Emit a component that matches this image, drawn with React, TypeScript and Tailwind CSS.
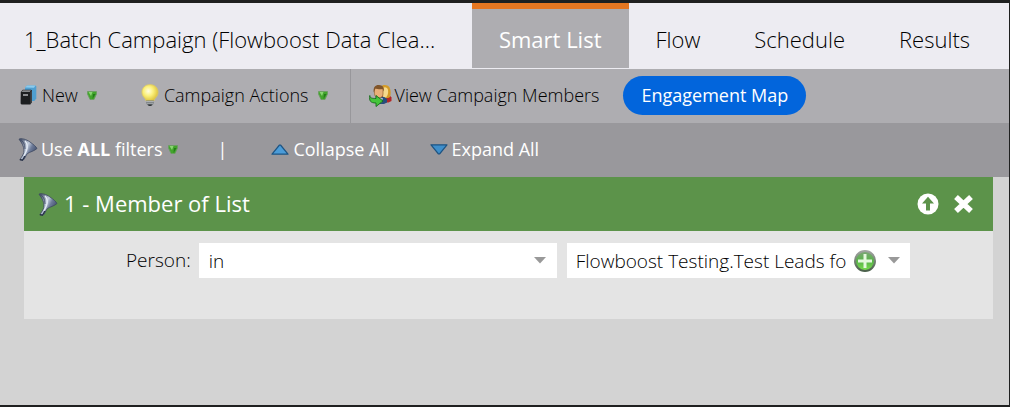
import React, { useState } from 'react';

const tabs = ['Smart List', 'Flow', 'Schedule', 'Results'];

function NotebookIcon() {
  return (
    <svg width="17" height="20" viewBox="0 0 17 20" aria-hidden="true">
      <path d="M5 2.500 7 .5h8.500l.8 1v12l-2 2.500H5z" fill="#4f9fd0" />
      <path d="M5 2.500 7 .5h8.500L14 2.800z" fill="#8ccbee" />
      <path d="M.8 7 2.800 4.800H11l1 .8v11.500L10.300 19.500H1.500l-.9-1z" fill="#1c1e20" />
      <path d="M1.300 7 3 5.200h8L9.800 7z" fill="#85878a" />
      <path d="M10.300 7.200 12 5.600v11.500l-1.700 2.200z" fill="#404346" />
      <rect x="3" y="9" width="5" height="2" fill="#8c8e91" />
    </svg>
  );
}

function BulbIcon() {
  return (
    <svg width="18" height="22" viewBox="0 0 18 22" aria-hidden="true">
      <defs>
        <radialGradient id="bulb" cx="0.4" cy="0.4" r="0.65">
          <stop offset="0" stopColor="#fffde2" />
          <stop offset="0.45" stopColor="#fbf07c" />
          <stop offset="1" stopColor="#d9bd35" />
        </radialGradient>
      </defs>
      <path d="M9 .6C4.200.6.9 4 .9 8.200c0 3.100 1.700 4.800 3 6.300.7.9.9 1.500 1.100 2.500h8c.2-1 .4-1.600 1.100-2.500 1.300-1.500 3-3.200 3-6.300C17.100 4 13.800.6 9 .6z" fill="url(#bulb)" stroke="#d9c66a" strokeWidth=".8" />
      <path d="M5.200 16.500h7.600v3L11 21.600H7l-1.800-2.100z" fill="#6e7377" />
      <path d="M5.200 17.400h7.600M5.400 19.200h7.200" stroke="#c5c9cc" strokeWidth=".8" />
      <path d="M7 20.500h4L10.300 22H7.700z" fill="#34383b" />
    </svg>
  );
}

function MembersIcon() {
  return (
    <svg width="23" height="23" viewBox="0 0 23 23" aria-hidden="true">
      <path d="M12.500 12c1.500-1.500 8-2 10 1.500V17l-3 1.500h-7z" fill="#b32626" />
      <path d="M12 3C13 .5 18.500.3 20.500 3.500c1.500 3 1.500 6.500.5 9.500-2 1.500-5 1.500-7 .5z" fill="#d49b27" />
      <path d="M14 4c2-1.500 4.500-.5 5 2 .5 3-.3 6-2 7.500h-3z" fill="#f6d98c" />
      <path d="M6 14c2-2 9.500-2.500 12 1v3.500l-3 1.500H8z" fill="#284d7c" />
      <path d="M10 14h4l-1.500 5z" fill="#a9b9d0" />
      <path d="M5.500 4h8.500v6c0 2.500-2 4-4.300 4-2.500 0-4.200-2-4.200-4.500z" fill="#e9b078" stroke="#98662f" strokeWidth=".7" />
      <path d="M4.700 8.500C4 3 6.500.8 10 1c3.500.2 5.500 2.500 4.700 6.500L13.500 5C11 5.500 8 5 6.500 4.500z" fill="#80552a" />
      <path d="M.8 11.500c0 2.500 2 3 6.200 3v-3l7 5.500-7 5.500v-3.500c-5.500 0-7-2-6.200-7.500z" fill="#45c53b" stroke="#176b1c" strokeWidth=".9" />
    </svg>
  );
}

function FunnelIcon() {
  return (
    <svg width="20" height="23" viewBox="0 0 20 23" aria-hidden="true">
      <defs>
        <linearGradient id="funnel" x1="0" y1="0.2" x2="1" y2="0.8">
          <stop offset="0" stopColor="#47526b" />
          <stop offset="0.4" stopColor="#c3cddd" />
          <stop offset="0.6" stopColor="#6d7b99" />
          <stop offset="1" stopColor="#303b59" />
        </linearGradient>
      </defs>
      <path d="M1 1.200C3 0 8 1 12 4c3.500 2.500 6 4.500 7 6.500-2.500 2.500-7.500 3.500-9.500 5C7.800 17 7 21 5 22.300l-3-.6C4 18 6.300 16 6 12 5.800 8.500 4 5 1 1.200z" fill="url(#funnel)" stroke="#3e4961" strokeWidth=".8" />
      <path d="M2 1.500C5 3 7 6 7 11" fill="none" stroke="#4a556e" strokeWidth="1" />
      <path d="M7 3c2 2 3 5 1.500 9.500L6 18" fill="none" stroke="#e6edf6" strokeWidth="1.300" />
      <path d="M1.800 21.700 4.500 22.200 7 18" fill="none" stroke="#222b40" strokeWidth="1.200" />
    </svg>
  );
}

function GreenArrow() {
  return (
    <svg width="10" height="9" viewBox="0 0 10 9" aria-hidden="true">
      <path d="M.5.5h9v2.500L7 8.500H3L.5 3z" fill="#43a52c" stroke="#6b9d62" strokeWidth=".8" />
      <path d="M1.500 1h4L4 5z" fill="#8ad474" />
      <path d="M6 3h2.500L5.500 8z" fill="#237b19" />
    </svg>
  );
}

function BlueTriangle({ down = false }: { down?: boolean }) {
  return (
    <svg width="18" height="11" viewBox="0 0 18 11" aria-hidden="true">
      {down ? (
        <path d="M1 .8h16L9.500 10h-1z" fill="#3f8fcb" stroke="#1e5483" strokeWidth="1.200" strokeLinejoin="round" />
      ) : (
        <path d="M1 10.200h16L9.500 1h-1z" fill="#4b9cd8" stroke="#1e5483" strokeWidth="1.200" strokeLinejoin="round" />
      )}
    </svg>
  );
}

function Caret() {
  return (
    <svg width="12" height="7" viewBox="0 0 12 7" aria-hidden="true">
      <path d="M0 0h12L6 6.500z" fill="#999" />
    </svg>
  );
}

function PlusIcon() {
  return (
    <svg width="22" height="22" viewBox="0 0 22 22" aria-hidden="true">
      <defs>
        <linearGradient id="plus" x1="0" y1="0" x2="0" y2="1">
          <stop offset="0" stopColor="#7fa67a" />
          <stop offset="0.5" stopColor="#58b348" />
          <stop offset="1" stopColor="#7be04f" />
        </linearGradient>
        <linearGradient id="rim" x1="0" y1="0" x2="0" y2="1">
          <stop offset="0" stopColor="#a2a5a2" />
          <stop offset="1" stopColor="#4a604a" />
        </linearGradient>
      </defs>
      <circle cx="11" cy="11" r="10" fill="url(#plus)" stroke="url(#rim)" strokeWidth="2" />
      <path d="M11 4v14M4 11h14" stroke="#e4f8dd" strokeWidth="3" />
    </svg>
  );
}

export default function App() {
  const [activeTab, setActiveTab] = useState('Smart List');
  const [operator, setOperator] = useState('in');
  const [list, setList] = useState('Flowboost Testing.Test Leads for Flowboost');

  return (
    <div className="flex min-h-screen flex-col border-t-[3px] border-r border-b-2 border-[#1f2020] bg-[#d3d3d3] font-['Open_Sans',sans-serif] text-lg font-light text-black">
      {/* Title and tabs */}
      <header className="flex h-[66px] bg-[#edecf2] text-[22px]">
        <h1 className="min-w-0 flex-1 self-center truncate pt-1.5 pl-6">1_Batch Campaign (Flowboost Data Clea...</h1>
        <nav className="mr-3 mb-px flex">
          {tabs.map((tab) => (
            <button
              key={tab}
              onClick={() => setActiveTab(tab)}
              className={`border-t-[6px] px-[27px] pt-0.5 ${activeTab === tab ? 'border-[#e67721] bg-[#aeadb1] font-normal text-white' : 'border-transparent'}`}
            >
              {tab}
            </button>
          ))}
        </nav>
      </header>

      {/* Campaign toolbar */}
      <div className="flex h-[54px] items-center bg-[#aeadb1]">
        <button className="ml-5 flex items-center gap-[5px] pb-0.5">
          <NotebookIcon />
          New
          <span className="ml-1"><GreenArrow /></span>
        </button>
        <button className="ml-11 flex items-center gap-[5px] pb-0.5">
          <BulbIcon />
          Campaign Actions
          <span className="ml-1"><GreenArrow /></span>
        </button>
        <div className="ml-[22px] h-full w-px bg-[#98979b]" />
        <button className="ml-[18px] flex items-center gap-[3px] pb-0.5">
          <MembersIcon />
          View Campaign Members
        </button>
        <button className="mb-0.5 ml-6 h-[39px] rounded-full bg-[#0265dc] px-[18px] font-normal text-white">
          Engagement Map
        </button>
      </div>

      {/* Filter toolbar */}
      <div className="flex h-[54px] items-center bg-[#99989c] pb-0.5 font-normal text-white">
        <button className="ml-[18px] flex items-center gap-[3px]">
          <FunnelIcon />
          <span>Use <b>ALL</b> filters</span>
          <span className="ml-0.5"><GreenArrow /></span>
        </button>
        <span className="ml-10">|</span>
        <button className="ml-11 flex items-center gap-1">
          <BlueTriangle />
          Collapse All
        </button>
        <button className="ml-10 flex items-center gap-1">
          <BlueTriangle down />
          Expand All
        </button>
      </div>

      {/* Filter card */}
      <main className="flex-1 pr-4 pl-6">
        <section className="bg-[#e4e4e4] pb-[41px]">
          <div className="flex h-[54px] items-center bg-[#5c934a] pr-[19px] pl-3.5 text-white">
            <FunnelIcon />
            <h2 className="ml-1.5 flex-1 pb-0.5 text-[22px] font-normal">1 - Member of List</h2>
            <button aria-label="Move up">
              <svg width="22" height="22" viewBox="0 0 22 22">
                <circle cx="11" cy="11" r="10.500" fill="#fff" />
                <path d="M11 3.800 17 10.500h-4V17.500H9V10.500H5z" fill="#5c934a" />
              </svg>
            </button>
            <button aria-label="Remove filter" className="ml-3.5">
              <svg width="21" height="20" viewBox="0 0 21 20">
                <path d="M3 3 18 17M18 3 3 17" stroke="#fff" strokeWidth="5.500" />
              </svg>
            </button>
          </div>
          <div className="flex items-center pt-3 text-[19px]">
            <label htmlFor="operator" className="ml-[102px] mr-2">Person:</label>
            <div className="relative flex">
              <select
                id="operator"
                value={operator}
                onChange={(e) => setOperator(e.target.value)}
                className="h-[35px] w-[358px] appearance-none bg-white pt-0.5 pl-2.5"
              >
                <option>in</option>
                <option>not in</option>
              </select>
              <span className="pointer-events-none absolute top-3.5 right-[11px] flex"><Caret /></span>
            </div>
            <div className="ml-2.5 flex h-[35px] w-[343px] items-center bg-white pr-2.5 pl-[9px]">
              <input
                aria-label="List"
                value={list}
                onChange={(e) => setList(e.target.value)}
                className="min-w-0 flex-1 pt-0.5 outline-none"
              />
              <button aria-label="Add list" className="ml-2"><PlusIcon /></button>
              <button aria-label="Show lists" className="ml-3"><Caret /></button>
            </div>
          </div>
        </section>
      </main>
    </div>
  );
}
